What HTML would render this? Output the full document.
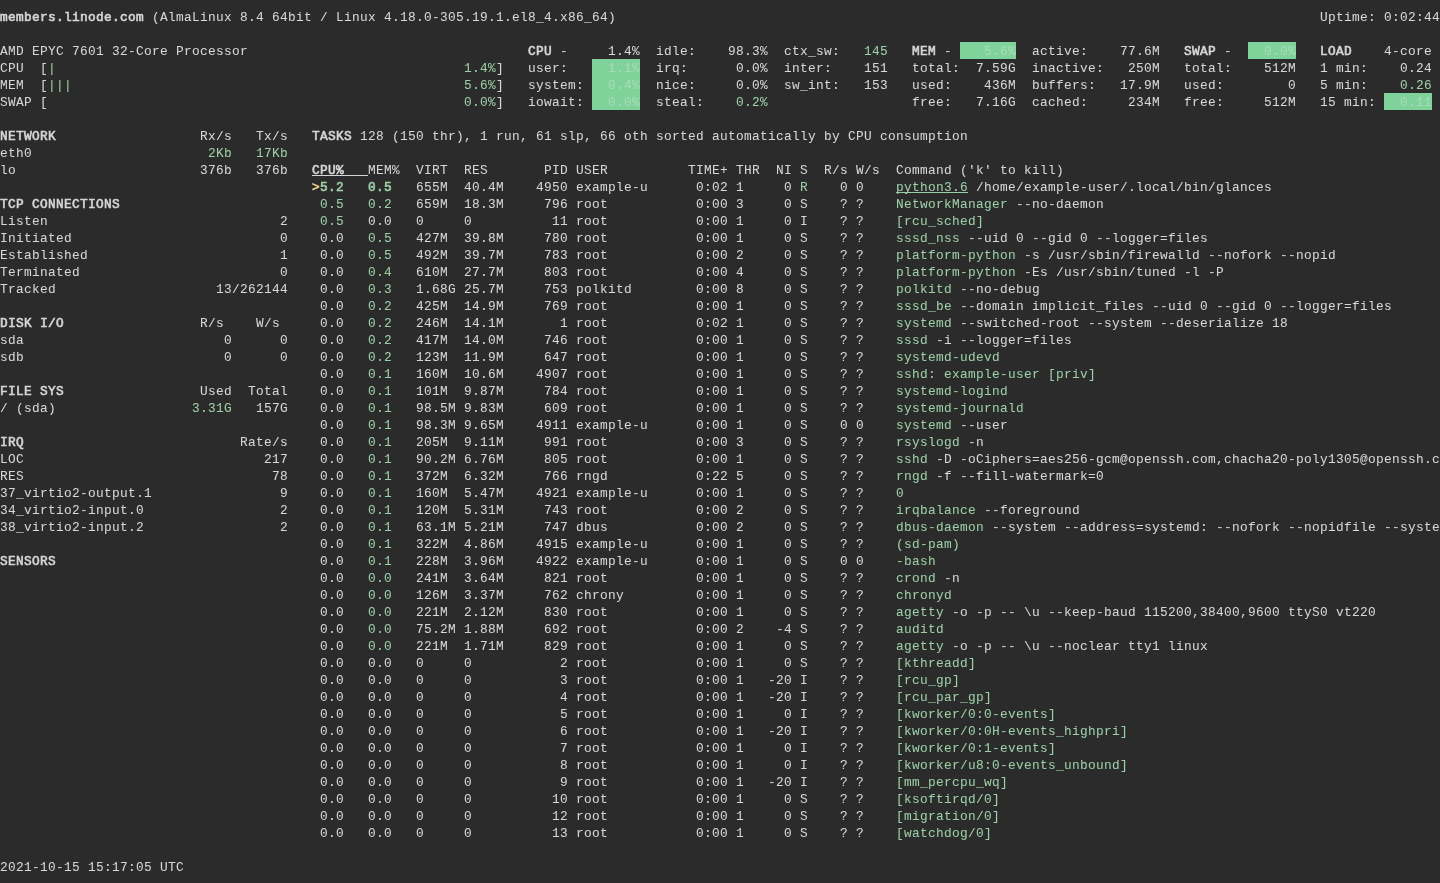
<!DOCTYPE html>
<html><head><meta charset="utf-8"><style>
html,body{margin:0;padding:0;width:1440px;height:883px;overflow:hidden;background:#2b2b2b;}
i{position:absolute;display:block;}
.bg{height:17px;background:#7fd39a;}
.ul{height:1px;background:#d6d6d6;}
pre{will-change:transform;position:absolute;left:0;top:9px;margin:0;font-family:"Liberation Mono",monospace;font-size:12.8px;line-height:17px;letter-spacing:0.32px;color:#d6d6d6;-webkit-text-stroke:0.05px currentColor;}
.b{font-weight:normal;-webkit-text-stroke:0.6px currentColor;}
.g{color:#9dcfa7;}
.gu{color:#9dcfa7;text-decoration:underline;text-underline-offset:1px;text-decoration-skip-ink:none;}
.y{color:#f0d08a;}
.yb{color:#f0d08a;font-weight:normal;-webkit-text-stroke:0.6px currentColor;}
.gb{color:#9dcfa7;font-weight:normal;-webkit-text-stroke:0.6px currentColor;}
.bx{color:#a8dcb6;}
</style></head><body>
<i class="bg" style="top:59px;left:592px;width:48px"></i><i class="bg" style="top:76px;left:592px;width:48px"></i><i class="bg" style="top:93px;left:592px;width:48px"></i><i class="bg" style="top:42px;left:960px;width:56px"></i><i class="bg" style="top:42px;left:1248px;width:48px"></i><i class="bg" style="top:93px;left:1384px;width:48px"></i><pre><span class="b">members.linode.com</span> (AlmaLinux 8.4 64bit / Linux 4.18.0-305.19.1.el8_4.x86_64)                                                                                        Uptime: 0:02:44

AMD EPYC 7601 32-Core Processor                                   <span class="b">CPU</span> -     1.4%  idle:    98.3%  ctx_sw:   <span class="g">145</span>   <span class="b">MEM</span> -    <span class="bx">5.6%</span>  active:    77.6M   <span class="b">SWAP</span> -    <span class="bx">0.0%</span>   <span class="b">LOAD</span>    4-core
CPU  [<span class="g">|</span>                                                   <span class="g">1.4%</span>]   user:     <span class="bx">1.1%</span>  irq:      0.0%  inter:    151   total:  7.59G  inactive:   250M   total:    512M   1 min:    0.24
MEM  [<span class="g">|||</span>                                                 <span class="g">5.6%</span>]   system:   <span class="bx">0.4%</span>  nice:     0.0%  sw_int:   153   used:    436M  buffers:   17.9M   used:        0   5 min:    <span class="g">0.26</span>
SWAP [                                                    <span class="g">0.0%</span>]   iowait:   <span class="bx">0.0%</span>  steal:    <span class="g">0.2%</span>                  free:   7.16G  cached:     234M   free:     512M   15 min:   <span class="bx">0.11</span>

<span class="b">NETWORK</span>                  Rx/s   Tx/s   <span class="b">TASKS</span> 128 (150 thr), 1 run, 61 slp, 66 oth sorted automatically by CPU consumption
eth0                      <span class="g">2Kb</span>   <span class="g">17Kb</span>
lo                       376b   376b   <span class="b">CPU%</span>   MEM%  VIRT  RES       PID USER          TIME+ THR  NI S  R/s W/s  Command (&#x27;k&#x27; to kill)
                                       <span class="yb">&gt;</span><span class="gb">5.2</span>   <span class="gb">0.5</span>   655M  40.4M    4950 example-u      0:02 1     0 <span class="g">R</span>    0 0    <span class="gu">python3.6</span> /home/example-user/.local/bin/glances
<span class="b">TCP CONNECTIONS</span>                         <span class="g">0.5</span>   <span class="g">0.2</span>   659M  18.3M     796 root           0:00 3     0 S    ? ?    <span class="g">NetworkManager</span> --no-daemon
Listen                             2    <span class="g">0.5</span>   0.0   0     0          11 root           0:00 1     0 I    ? ?    <span class="g">[rcu_sched]</span>
Initiated                          0    0.0   <span class="g">0.5</span>   427M  39.8M     780 root           0:00 1     0 S    ? ?    <span class="g">sssd_nss</span> --uid 0 --gid 0 --logger=files
Established                        1    0.0   <span class="g">0.5</span>   492M  39.7M     783 root           0:00 2     0 S    ? ?    <span class="g">platform-python</span> -s /usr/sbin/firewalld --nofork --nopid
Terminated                         0    0.0   <span class="g">0.4</span>   610M  27.7M     803 root           0:00 4     0 S    ? ?    <span class="g">platform-python</span> -Es /usr/sbin/tuned -l -P
Tracked                    13/262144    0.0   <span class="g">0.3</span>   1.68G 25.7M     753 polkitd        0:00 8     0 S    ? ?    <span class="g">polkitd</span> --no-debug
                                        0.0   <span class="g">0.2</span>   425M  14.9M     769 root           0:00 1     0 S    ? ?    <span class="g">sssd_be</span> --domain implicit_files --uid 0 --gid 0 --logger=files
<span class="b">DISK I/O</span>                 R/s    W/s     0.0   <span class="g">0.2</span>   246M  14.1M       1 root           0:02 1     0 S    ? ?    <span class="g">systemd</span> --switched-root --system --deserialize 18
sda                         0      0    0.0   <span class="g">0.2</span>   417M  14.0M     746 root           0:00 1     0 S    ? ?    <span class="g">sssd</span> -i --logger=files
sdb                         0      0    0.0   <span class="g">0.2</span>   123M  11.9M     647 root           0:00 1     0 S    ? ?    <span class="g">systemd-udevd</span>
                                        0.0   <span class="g">0.1</span>   160M  10.6M    4907 root           0:00 1     0 S    ? ?    <span class="g">sshd: example-user [priv]</span>
<span class="b">FILE SYS</span>                 Used  Total    0.0   <span class="g">0.1</span>   101M  9.87M     784 root           0:00 1     0 S    ? ?    <span class="g">systemd-logind</span>
/ (sda)                 <span class="g">3.31G</span>   157G    0.0   <span class="g">0.1</span>   98.5M 9.83M     609 root           0:00 1     0 S    ? ?    <span class="g">systemd-journald</span>
                                        0.0   <span class="g">0.1</span>   98.3M 9.65M    4911 example-u      0:00 1     0 S    0 0    <span class="g">systemd</span> --user
<span class="b">IRQ</span>                           Rate/s    0.0   <span class="g">0.1</span>   205M  9.11M     991 root           0:00 3     0 S    ? ?    <span class="g">rsyslogd</span> -n
LOC                              217    0.0   <span class="g">0.1</span>   90.2M 6.76M     805 root           0:00 1     0 S    ? ?    <span class="g">sshd</span> -D -oCiphers=aes256-gcm@openssh.com,chacha20-poly1305@openssh.c
RES                               78    0.0   <span class="g">0.1</span>   372M  6.32M     766 rngd           0:22 5     0 S    ? ?    <span class="g">rngd</span> -f --fill-watermark=0
37_virtio2-output.1                9    0.0   <span class="g">0.1</span>   160M  5.47M    4921 example-u      0:00 1     0 S    ? ?    <span class="g">0</span>
34_virtio2-input.0                 2    0.0   <span class="g">0.1</span>   120M  5.31M     743 root           0:00 2     0 S    ? ?    <span class="g">irqbalance</span> --foreground
38_virtio2-input.2                 2    0.0   <span class="g">0.1</span>   63.1M 5.21M     747 dbus           0:00 2     0 S    ? ?    <span class="g">dbus-daemon</span> --system --address=systemd: --nofork --nopidfile --syste
                                        0.0   <span class="g">0.1</span>   322M  4.86M    4915 example-u      0:00 1     0 S    ? ?    <span class="g">(sd-pam)</span>
<span class="b">SENSORS</span>                                 0.0   <span class="g">0.1</span>   228M  3.96M    4922 example-u      0:00 1     0 S    0 0    <span class="g">-bash</span>
                                        0.0   <span class="g">0.0</span>   241M  3.64M     821 root           0:00 1     0 S    ? ?    <span class="g">crond</span> -n
                                        0.0   <span class="g">0.0</span>   126M  3.37M     762 chrony         0:00 1     0 S    ? ?    <span class="g">chronyd</span>
                                        0.0   <span class="g">0.0</span>   221M  2.12M     830 root           0:00 1     0 S    ? ?    <span class="g">agetty</span> -o -p -- \u --keep-baud 115200,38400,9600 ttyS0 vt220
                                        0.0   <span class="g">0.0</span>   75.2M 1.88M     692 root           0:00 2    -4 S    ? ?    <span class="g">auditd</span>
                                        0.0   <span class="g">0.0</span>   221M  1.71M     829 root           0:00 1     0 S    ? ?    <span class="g">agetty</span> -o -p -- \u --noclear tty1 linux
                                        0.0   0.0   0     0           2 root           0:00 1     0 S    ? ?    <span class="g">[kthreadd]</span>
                                        0.0   0.0   0     0           3 root           0:00 1   -20 I    ? ?    <span class="g">[rcu_gp]</span>
                                        0.0   0.0   0     0           4 root           0:00 1   -20 I    ? ?    <span class="g">[rcu_par_gp]</span>
                                        0.0   0.0   0     0           5 root           0:00 1     0 I    ? ?    <span class="g">[kworker/0:0-events]</span>
                                        0.0   0.0   0     0           6 root           0:00 1   -20 I    ? ?    <span class="g">[kworker/0:0H-events_highpri]</span>
                                        0.0   0.0   0     0           7 root           0:00 1     0 I    ? ?    <span class="g">[kworker/0:1-events]</span>
                                        0.0   0.0   0     0           8 root           0:00 1     0 I    ? ?    <span class="g">[kworker/u8:0-events_unbound]</span>
                                        0.0   0.0   0     0           9 root           0:00 1   -20 I    ? ?    <span class="g">[mm_percpu_wq]</span>
                                        0.0   0.0   0     0          10 root           0:00 1     0 S    ? ?    <span class="g">[ksoftirqd/0]</span>
                                        0.0   0.0   0     0          12 root           0:00 1     0 S    ? ?    <span class="g">[migration/0]</span>
                                        0.0   0.0   0     0          13 root           0:00 1     0 S    ? ?    <span class="g">[watchdog/0]</span>

2021-10-15 15:17:05 UTC
</pre><i class="ul"  style="top:175px;left:312px;width:56px"></i>
</body></html>
